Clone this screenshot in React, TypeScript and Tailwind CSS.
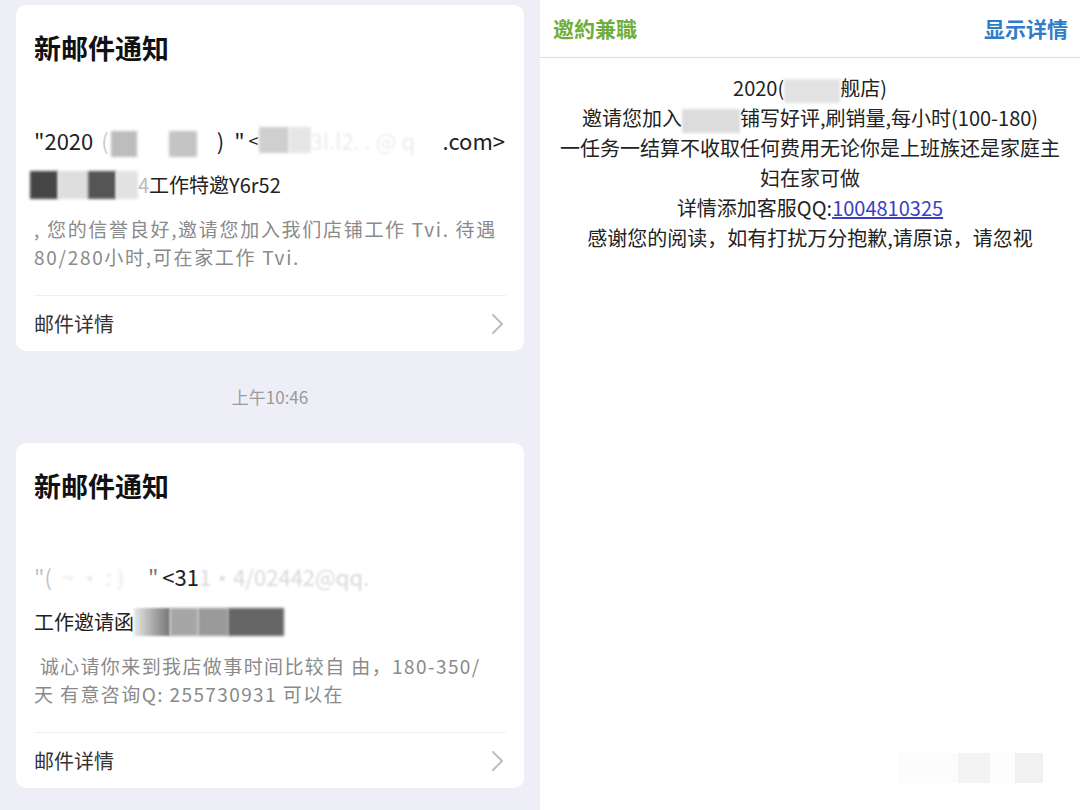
import React from 'react';

const Chevron = () => (
  <svg width="14" height="22" viewBox="0 0 14 22" fill="none">
    <polyline points="3,2 12,11 3,20" stroke="#bdbdbd" strokeWidth="2" strokeLinecap="round" strokeLinejoin="round" />
  </svg>
);

// mosaic block used for the blurred-out parts of the screenshot
const Blur = ({ w, c, h = 26 }: { w: number; c: string; h?: number }) => (
  <span className="inline-block align-middle blur-[1.5px]" style={{ width: w, height: h, background: c }} />
);

const CardFooter = () => (
  <div className="mt-[24px] border-t border-[#efefef] h-[56px] flex items-center justify-between">
    <span className="text-[20px] text-[#333]">邮件详情</span>
    <span className="mr-[2px]"><Chevron /></span>
  </div>
);

const App: React.FC = () => {
  return (
    <div className="w-[1080px] h-[810px] flex overflow-hidden font-['Noto_Sans_CJK_SC',sans-serif]">
      {/* Left: mail notifications */}
      <div className="w-[540px] h-full bg-[#eeeef7] pl-[16px] pr-[16px] pt-[5px] flex flex-col">
        <div className="bg-white rounded-[10px] px-[18px] pt-[27px]">
          <div className="text-[27px] leading-[32px] font-bold text-[#111]">新邮件通知</div>
          <div className="mt-[61px] h-[30px] flex items-center text-[22px] text-[#222] whitespace-nowrap">
            <span>"2020</span>
            <span className="ml-[8px] text-[#ccc]">(</span>
            <span className="ml-[2px]"><Blur w={26} c="#bdbdbd" /></span>
            <span className="ml-[32px]"><Blur w={28} c="#c4c4c4" /></span>
            <span className="ml-[20px]">)</span>
            <span className="ml-[10px]">"</span>
            <span className="ml-[4px] text-[18px]">&lt;</span>
            <Blur w={30} c="#cfcfcf" />
            <Blur w={22} c="#e6e6e6" />
            <span className="w-[132px] text-[#ececec] blur-[1px] overflow-hidden">3l.l2. . @ q</span>
            <span>.com&gt;</span>
          </div>
          <div className="mt-[16px] h-[28px] flex items-center text-[20px] text-[#222] whitespace-nowrap">
            <span className="-ml-[4px] flex">
              <Blur w={28} c="#454545" h={28} />
              <Blur w={30} c="#dedede" h={28} />
              <Blur w={28} c="#555" h={28} />
              <Blur w={22} c="#e2e2e2" h={28} />
            </span>
            <span className="text-[#bbb]">4</span>
            <span>工作特邀Y6r52</span>
          </div>
          <div className="mt-[16px] text-[19px] leading-[28px] tracking-[1.7px] text-[#8a8a8a] whitespace-nowrap">
            <div>, 您的信誉良好,邀请您加入我们店铺工作 Tvi. 待遇</div>
            <div>80/280小时,可在家工作 Tvi.</div>
          </div>
          <CardFooter />
        </div>

        <div className="h-[92px] flex items-center justify-center text-[17px] text-[#9a9a9a]">上午10:46</div>

        <div className="bg-white rounded-[10px] px-[18px] pt-[27px]">
          <div className="text-[27px] leading-[32px] font-bold text-[#111]">新邮件通知</div>
          <div className="mt-[59px] h-[30px] flex items-center text-[22px] text-[#222] whitespace-nowrap">
            <span className="text-[#c4c4c4]">"(</span>
            <span className="w-[96px] text-[#e4e4e4] blur-[1.5px]">&nbsp;&nbsp;~ · :  )</span>
            <span className="text-[#777]">"</span>
            <span className="ml-[4px]">&lt;31</span>
            <span className="text-[#d8d8d8] blur-[1px]">1·4/02442@qq.</span>
          </div>
          <div className="mt-[17px] h-[28px] flex items-center text-[20px] text-[#222] whitespace-nowrap">
            <span>工作邀请函</span>
            <span className="flex">
              <span className="inline-block w-[36px] h-[28px] bg-gradient-to-r from-[#e8e8e8] to-[#777] blur-[1px]" />
              <Blur w={28} c="#a6a6a6" h={28} />
              <Blur w={30} c="#9a9a9a" h={28} />
              <Blur w={56} c="#666" h={28} />
            </span>
          </div>
          <div className="mt-[16px] text-[19px] leading-[28px] tracking-[1.4px] text-[#8a8a8a] whitespace-nowrap">
            <div>&nbsp;诚心请你来到我店做事时间比较自 由，180-350/</div>
            <div>天 有意咨询Q: 255730931 可以在</div>
          </div>
          <CardFooter />
        </div>
      </div>

      {/* Right: message detail */}
      <div className="flex-1 h-full bg-white flex flex-col">
        <div className="h-[58px] border-b border-[#dcdcdc] flex items-center justify-between pl-[13px] pr-[12px]">
          <span className="text-[21px] font-bold text-[#6fae3c]">邀約兼職</span>
          <span className="text-[21px] font-bold text-[#2f7dc9]">显示详情</span>
        </div>
        <div className="pt-[15px] text-center text-[20px] leading-[30px] text-[#222]">
          <div>
            2020(<Blur w={56} c="#e3e3e3" h={24} />舰店)
          </div>
          <div>
            邀请您加入<Blur w={58} c="#dcdcdc" h={24} />铺写好评,刷销量,每小时(100-180)
          </div>
          <div>一任务一结算不收取任何费用无论你是上班族还是家庭主</div>
          <div>妇在家可做</div>
          <div>
            详情添加客服QQ:<span className="text-[#3a3fc4] underline">1004810325</span>
          </div>
          <div>感谢您的阅读，如有打扰万分抱歉,请原谅，请忽视</div>
        </div>
        <div className="mt-auto mb-[27px] mr-[37px] flex justify-end">
          <span className="inline-block w-[60px] h-[30px] bg-[#fcfcfc]" />
          <span className="inline-block w-[32px] h-[30px] bg-[#f3f3f3]" />
          <span className="inline-block w-[25px] h-[30px] bg-[#fdfdfd]" />
          <span className="inline-block w-[28px] h-[30px] bg-[#f1f1f1]" />
        </div>
      </div>
    </div>
  );
};

export default App;
